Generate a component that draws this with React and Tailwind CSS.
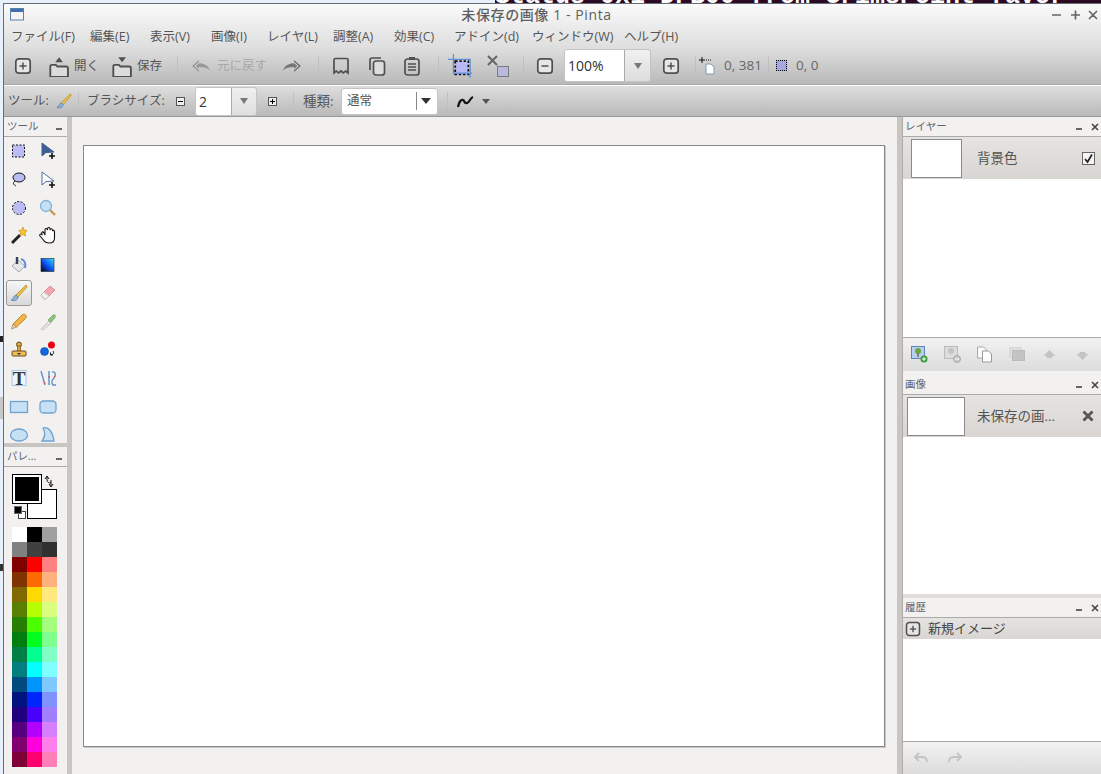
import React from "react";

const font = { fontFamily: '"Open Sans", "Noto Sans CJK JP", sans-serif' };

const menus = [
  ["ファイル(F)", "w-[79px]"],
  ["編集(E)", "w-[60px]"],
  ["表示(V)", "w-[61px]"],
  ["画像(I)", "w-[56px]"],
  ["レイヤ(L)", "w-[66px]"],
  ["調整(A)", "w-[61px]"],
  ["効果(C)", "w-[60px]"],
  ["アドイン(d)", "w-[78px]"],
  ["ウィンドウ(W)", "w-[92px]"],
  ["ヘルプ(H)", "w-[70px]"],
];

const palette = [
  "#ffffff", "#000000", "#a0a0a0",
  "#808080", "#404040", "#303030",
  "#800000", "#ff0000", "#ff8080",
  "#803300", "#ff6a00", "#ffb280",
  "#806a00", "#ffd800", "#ffe97f",
  "#5b7f00", "#b6ff00", "#daff7f",
  "#267f00", "#4cff00", "#a5ff7f",
  "#007f0e", "#00ff21", "#7fff8e",
  "#007f46", "#00ff90", "#7fffc5",
  "#007f7f", "#00ffff", "#7fffff",
  "#004a7f", "#0094ff", "#7fc9ff",
  "#00137f", "#0026ff", "#7f92ff",
  "#21007f", "#4800ff", "#a17fff",
  "#57007f", "#b200ff", "#d67fff",
  "#7f006e", "#ff00dc", "#ff7fed",
  "#7f0037", "#ff006e", "#ff7fb6",
];

function Ico({ s = 20, children }) {
  return (
    <svg width={s} height={s} viewBox="0 0 20 20" fill="none" className="block shrink-0">
      {children}
    </svg>
  );
}

const dark = "#505050";

function BoxIcon({ plus, s = 20, color = dark }) {
  return (
    <Ico s={s}>
      <rect x="2.800" y="2.800" width="14.400" height="14.400" rx="3" stroke={color} strokeWidth="1.700" fill="#e6e6e6" />
      <path d="M6.500 10h7" stroke={color} strokeWidth="1.500" />
      {plus && <path d="M10 6.500v7" stroke={color} strokeWidth="1.500" />}
    </Ico>
  );
}

function TrayIcon({ down }) {
  return (
    <Ico s={22}>
      <path d="M3 20V10.500c0-1 .6-1.500 1.500-1.500h3.500l1.500 1.500h8c1 0 1.500.5 1.500 1.500v8z" stroke={dark} strokeWidth="1.700" fill="#dcdcdc" />
      {down ? <path d="M7.500 2h7L11 6.500z" fill={dark} /> : <path d="M11 2l3.500 4.500h-7z" fill={dark} />}
    </Ico>
  );
}

function UndoIcon({ flip, color = "#999" }) {
  return (
    <svg width="20" height="14" viewBox="0 0 20 14" className={flip ? "block -scale-x-100" : "block"}>
      <path d="M1 7l7-6v3.200c5 0 9 2 11 7-3-2.500-6-3.200-11-3.200V13z" fill={color} />
      <path d="M4 7l4-3.500M4 7l4 3.500" stroke="#e0e0e0" strokeWidth="1" />
    </svg>
  );
}

function Sep({ className = "h-[20px]" }) {
  return <div className={`w-px bg-[#c0c0c0] shrink-0 ${className}`} />;
}

function Combo({ text, className, field = "w-[60px]" }) {
  return (
    <div className={`flex rounded-[3px] border border-[#c4c4c4] bg-linear-to-b from-[#f0f0f0] to-[#dedede] shrink-0 overflow-hidden ${className}`}>
      <div className={`${field} bg-white flex items-center pl-[3px] text-[14px] text-[#333] border-r border-[#aaa]`}>{text}</div>
      <div className="flex-1 flex items-center justify-center">
        <div className="w-0 h-0 border-x-[4px] border-x-transparent border-t-[6px] border-t-[#777]" />
      </div>
    </div>
  );
}

function Small({ plus }) {
  return (
    <div className="w-[9px] h-[9px] border border-[#555] bg-[#eee] relative shrink-0">
      <div className="absolute left-[1px] top-[3px] w-[5px] h-px bg-black" />
      {plus && <div className="absolute left-[3px] top-[1px] w-px h-[5px] bg-black" />}
    </div>
  );
}

function Crop() {
  return (
    <Ico s={24}>
      <rect x="6" y="6" width="11" height="11" fill="#b9b9f5" stroke="#111" strokeDasharray="2 1.500" strokeWidth="1.500" />
      <path d="M0 4.500h18.500V20M4.500 0v16H20" stroke="#5d8fd8" strokeWidth="1" fill="none" />
    </Ico>
  );
}

function Deselect() {
  return (
    <svg width="24" height="24" viewBox="0 0 24 24" className="block shrink-0">
      <path d="M2 2l9 9M11 2l-9 9" stroke="#666" strokeWidth="2" />
      <rect x="11.500" y="12.500" width="11" height="10" fill="#b9b9df" stroke="#333" strokeDasharray="1 1" />
    </svg>
  );
}

function ToolBtn({ children, active }) {
  return (
    <div className="flex items-center justify-center">
      <div className={active ? "w-[26px] h-[26px] flex items-center justify-center rounded-[3px] border border-[#999] bg-linear-to-b from-[#f6f6f6] to-[#d8d8d8]" : "w-[26px] h-[26px] flex items-center justify-center"}>
        {children}
      </div>
    </div>
  );
}

const arrow = (fill, stroke) => (
  <>
    <path d="M4 2v13l4-3.500 8-.5z" fill={fill} stroke={stroke} strokeWidth="1" />
    <path d="M14 12v6M11 15h6" stroke="#111" strokeWidth="1.600" />
  </>
);

const Brush = () => (
  <>
    <path d="M17 2L7 12l2 2L18 4z" fill="#eec04a" stroke="#b98a20" strokeWidth=".8" />
    <path d="M7 12c-3 1-2 4-5 5 3 1.500 7 .5 7-3z" fill="#8fb0d8" stroke="#5a7fae" strokeWidth=".8" />
  </>
);

const tools = [
  <rect x="3.500" y="4" width="12" height="12" fill="#bcbcf4" stroke="#111" strokeDasharray="2 1.500" />,
  arrow("#3f5f92", "#3f5f92"),
  <>
    <ellipse cx="10" cy="7.500" rx="6" ry="4.500" fill="#bcbcf4" stroke="#111" />
    <path d="M6 11c-3 2-1 4 1 5" stroke="#111" />
  </>,
  arrow("#fff", "#4a6a9c"),
  <circle cx="10" cy="10" r="6.500" fill="#bcbcf4" stroke="#111" strokeDasharray="2 1.500" />,
  <>
    <circle cx="8" cy="8" r="5.500" fill="#c3e0f6" stroke="#7fb0da" strokeWidth="1.300" />
    <path d="M12 12l5 5" stroke="#c49a50" strokeWidth="2.400" />
  </>,
  <>
    <path d="M3 17L11 9" stroke="#222" strokeWidth="3" />
    <path d="M14 1l1 3 3 .5-2 2.500.5 3-3-1.500-2.500 1 .5-3-2-2 3-.5z" fill="#f2c230" stroke="#c98a20" strokeWidth=".6" />
  </>,
  <path d="M4 8c-1-2 1-3 2-1l1 2V4c0-2 2-2 2.500 0V3c0-2 2.500-2 2.500 0v1c.5-2 2.500-1.500 2.500.5V5c.5-1 2-1 2 1v6c0 3-2 5-5 5-4 0-5-1-6-3L2 10c-1-1.500 1-2.500 2-1.500z" fill="#fff" stroke="#111" strokeWidth="1.100" />,
  <>
    <path d="M3 11l6-6 7 6-6 6z" fill="#e6e6e6" stroke="#aaa" />
    <path d="M8 2v7" stroke="#345" strokeWidth="2.400" />
    <path d="M12 4c4 1 5 5 4 9" stroke="#5d8fd8" strokeWidth="2" />
  </>,
  <>
    <defs>
      <linearGradient id="grad" x1="0" y1="1" x2="1" y2="0">
        <stop offset="0" stopColor="#000" />
        <stop offset=".45" stopColor="#0a4af0" />
        <stop offset="1" stopColor="#35e0ff" />
      </linearGradient>
    </defs>
    <rect x="3" y="3.500" width="13" height="13" fill="url(#grad)" stroke="#222" strokeWidth=".6" />
  </>,
  <Brush />,
  <>
    <path d="M3 12l9-9 5 4-9 9H6z" fill="#f4a4ac" stroke="#c88" strokeWidth=".8" />
    <path d="M3 12l3-3 5 4-3 3H6z" fill="#f0f0f0" stroke="#bbb" strokeWidth=".8" />
  </>,
  <>
    <path d="M4 12L13 3c1-1 2.500-1 3.500 0s1 2.500 0 3.500L7.500 15z" fill="#f0b54a" stroke="#c08a30" />
    <path d="M4 12l3.500 3-5 2z" fill="#eed5a8" stroke="#a86" strokeWidth=".8" />
  </>,
  <>
    <path d="M3 17l8-8 2 2-8 7z" fill="#e4e4e4" stroke="#c4c4c4" />
    <path d="M10 8l5-5c2-1 3 1 2 2.500l-4 5z" fill="#8cc47c" stroke="#7aa86c" strokeWidth=".8" />
  </>,
  <>
    <circle cx="10" cy="4.500" r="2.500" fill="#e0a840" stroke="#6a4a18" />
    <rect x="8.500" y="6" width="3" height="6" fill="#e0a840" stroke="#6a4a18" strokeWidth=".7" />
    <rect x="3" y="11" width="14" height="5" rx="1" fill="#eebd55" stroke="#6a4a18" />
    <path d="M8 13h4l-2 2z" fill="#333" />
  </>,
  <>
    <circle cx="13.500" cy="5" r="3.500" fill="#e8000f" />
    <circle cx="6.500" cy="11.500" r="4" fill="#1268e0" stroke="#0a3a88" strokeWidth=".5" />
    <path d="M15 11c1.500 2 0 4-2.500 3.500M12.500 12.500v2.500h2.500" stroke="#111" strokeWidth="1" />
  </>,
  <>
    <rect x="3" y="2.500" width="14" height="15" fill="#f0f4fa" stroke="#9cbce4" strokeWidth=".8" />
    <text x="10" y="16.500" textAnchor="middle" fontSize="19" fontWeight="700" fill="#333" fontFamily="Liberation Serif, serif">T</text>
  </>,
  <>
    <path d="M3 3l4 14M11 3v14" stroke="#5d8fc8" strokeWidth="1.400" />
    <path d="M14 4c4-1 4 4 2 6s-3 5-1 7h3" stroke="#5d8fc8" strokeWidth="1.400" />
    <path d="M6 14l1 2M11 8v2M16 8l1 1" stroke="#e25050" strokeWidth="1.200" />
  </>,
  <rect x="1.500" y="4.500" width="17" height="11" fill="#c7e0f4" stroke="#6fa3d0" strokeWidth="1.300" />,
  <rect x="2" y="4" width="16" height="12" rx="3.500" fill="#c7e0f4" stroke="#6fa3d0" strokeWidth="1.300" />,
  <ellipse cx="10" cy="10" rx="8.500" ry="6" fill="#c7e0f4" stroke="#6fa3d0" strokeWidth="1.300" />,
  <path d="M5 3c6-2 10 5 11 13H4c3-4 4-8 1-13z" fill="#c7e0f4" stroke="#6fa3d0" strokeWidth="1.300" />,
];

function DockHead({ title, dash = "right-[19px]", close = "right-[2px]", pad = "pl-[3px]" }) {
  return (
    <div className={`h-[20px] shrink-0 relative bg-[#f2f1f0] border-b border-[#aaa] flex items-center text-[10.5px] text-[#5c6470] ${pad}`}>
      {title}
      <div className={`absolute top-[11px] w-[6px] h-[2px] bg-[#666] ${dash}`} />
      {close && (
        <svg width="8" height="8" viewBox="0 0 8 8" className={`absolute top-[6px] ${close}`}>
          <path d="M1 1l6 6M7 1l-6 6" stroke="#444" strokeWidth="1.600" />
        </svg>
      )}
    </div>
  );
}

function Thumb({ className }) {
  return <div className={`bg-white border border-[#8a8a8a] shrink-0 ${className}`} />;
}

function BottomBar({ className, children }) {
  return (
    <div className={`border-t border-[#aaa] bg-linear-to-b from-[#f2f2f2] to-[#dcdcdc] flex items-center shrink-0 ${className}`}>
      {children}
    </div>
  );
}

function UndoSmall({ flip }) {
  return (
    <svg width="18" height="12" viewBox="0 0 18 12" className={flip ? "block -scale-x-100" : "block"}>
      <path d="M6 1L2 5l4 4M2 5h7c3 0 5 2 5 5" stroke="#c4c4c4" strokeWidth="1.800" fill="none" />
    </svg>
  );
}

export default function App() {
  return (
    <div style={font} className="w-[1101px] h-[774px] overflow-hidden flex flex-col bg-[#e8f0fc]">
      {/* desktop behind the window */}
      <div className="h-[3px] shrink-0 flex">
        <div className="w-[495px]" />
        <div className="flex-1 bg-[#2c0a24] overflow-hidden relative">
          <div className="absolute left-0 bottom-[-6px] text-white font-bold whitespace-pre text-[25px] leading-[25px]" style={{ fontFamily: '"Liberation Mono", monospace' }}>
            Status 0x1 DFB00 from GrimsPoint favor
          </div>
        </div>
      </div>
      <div className="flex-1 flex min-h-0">
        <div className="w-[3px] shrink-0 flex flex-col">
          <div className="h-[333px]" />
          <div className="h-[6px] bg-[#222]" />
          <div className="h-[55px]" />
          <div className="h-[22px] bg-[#c8c8c8]" />
          <div className="h-[145px]" />
          <div className="h-[7px] bg-[#333]" />
        </div>

        <div className="flex-1 flex flex-col border-l border-t border-[#666c78] min-w-0">
          <div className="bg-linear-to-b from-[#fafafa] via-[#dedede] via-55% to-[#b9b9b9] shrink-0">
            {/* title bar */}
            <div className="h-[21px] relative flex items-center justify-center text-[14px] tracking-[0.6px] font-medium text-[#5f5f5f]">
              <svg width="14" height="13" viewBox="0 0 14 13" className="absolute left-[6px] top-[4px]">
                <rect x="0.500" y="0.500" width="13" height="11.500" fill="#f4f4f4" stroke="#5f7fa8" />
                <rect x="1" y="1" width="12" height="3" fill="#3f6fb0" />
              </svg>
              <span className="mr-[32px]">未保存の画像 1 - Pinta</span>
              <div className="absolute right-0 top-0 flex items-center h-[21px]">
                <svg width="60" height="14" viewBox="0 0 60 14" className="block">
                  <path d="M11 7h9M30 7h9M34.500 2.500v9M48 3l8 8M56 3l-8 8" stroke="#666" strokeWidth="1.700" />
                </svg>
              </div>
            </div>
            {/* menu */}
            <div className="h-[22px] flex items-center pl-[7px] pt-[2px] text-[12.5px] text-[#555]">
              {menus.map(([m, w]) => (
                <div key={m} className={`${w} shrink-0 whitespace-nowrap`}>{m}</div>
              ))}
            </div>
            {/* main toolbar */}
            <div className="h-[37px] flex items-center pl-[9px] text-[12.5px] text-[#555]">
              <BoxIcon plus />
              <div className="ml-[14px]"><TrayIcon /></div>
              <span className="ml-[5px] mt-[2px] w-[26px]">開く</span>
              <div className="ml-[10px]"><TrayIcon down /></div>
              <span className="ml-[5px] mt-[2px] w-[30px]">保存</span>
              <Sep className="h-[20px] ml-[10px]" />
              <div className="ml-[13px]"><UndoIcon /></div>
              <span className="ml-[6px] mt-[2px] w-[54px] text-[#a8a8a8] whitespace-nowrap">元に戻す</span>
              <div className="ml-[11px]"><UndoIcon flip color="#777" /></div>
              <Sep className="h-[20px] ml-[16px]" />
              <svg width="20" height="20" viewBox="0 0 20 20" className="block ml-[12px]">
                <path d="M3 17V4c0-1 .5-1.500 1.500-1.500h11c1 0 1.500.5 1.500 1.500v13l-2.300-2-2.400 2-2.300-2-2.300 2-2.400-2z" stroke={dark} strokeWidth="1.700" fill="none" />
              </svg>
              <svg width="20" height="20" viewBox="0 0 20 20" className="block ml-[16px]">
                <path d="M3 14V4c0-1 .5-2 2-2h9" stroke={dark} strokeWidth="1.700" fill="none" />
                <rect x="6.500" y="5" width="11" height="14" rx="2.500" stroke={dark} strokeWidth="1.700" fill="#ddd" />
              </svg>
              <svg width="20" height="20" viewBox="0 0 20 20" className="block ml-[15px]">
                <rect x="3" y="3" width="14" height="16" rx="2.500" stroke={dark} strokeWidth="1.700" fill="none" />
                <rect x="7" y="1" width="6" height="3" fill={dark} />
                <path d="M6 8h8M6 11h8M6 14h8" stroke={dark} strokeWidth="1.500" />
              </svg>
              <Sep className="h-[20px] ml-[16px]" />
              <div className="ml-[9px]"><Crop /></div>
              <div className="ml-[14px]"><Deselect /></div>
              <Sep className="h-[20px] ml-[13px]" />
              <div className="ml-[11px]"><BoxIcon /></div>
              <Combo text="100%" className="w-[87px] h-[33px] ml-[9px]" />
              <div className="ml-[10px]"><BoxIcon plus /></div>
              <Sep className="h-[20px] ml-[14px]" />
              <svg width="18" height="18" viewBox="0 0 18 18" className="block ml-[3px]">
                <path d="M0 3h6M3 0v6" stroke="#111" />
                <path d="M7 3h6" stroke="#111" strokeDasharray="1 1" />
                <path d="M7 7h5l3 3v7H7z" fill="#fff" stroke="#7a9ac0" />
              </svg>
              <span className="ml-[7px] w-[44px] text-[13.5px] text-[#666] whitespace-nowrap">0, 381</span>
              <Sep className="h-[20px]" />
              <div className="w-[11px] h-[11px] ml-[7px] bg-[#a8a8e0] border border-dotted border-black" />
              <span className="ml-[9px] text-[13.5px] text-[#666]">0, 0</span>
            </div>
          </div>
          <div className="h-[2px] shrink-0 border-t border-[#a8a8a8] bg-white" />

          {/* tool options toolbar */}
          <div className="h-[30px] shrink-0 flex items-center pl-[4px] bg-linear-to-b from-[#dedede] to-[#b9b9b9] border-b border-[#999] text-[12.5px] text-[#555] box-content">
            <span className="w-[43px]">ツール:</span>
            <div className="ml-[4px]"><Ico s={18}><Brush /></Ico></div>
            <Sep className="h-[19px] ml-[5px]" />
            <span className="ml-[8px] w-[80px] whitespace-nowrap">ブラシサイズ:</span>
            <div className="ml-[9px]"><Small /></div>
            <Combo text="2" field="w-[36px]" className="w-[62px] h-[29px] ml-[10px]" />
            <div className="ml-[11px]"><Small plus /></div>
            <Sep className="h-[19px] ml-[16px]" />
            <span className="ml-[9px] w-[32px] text-[13.5px]">種類:</span>
            <div className="ml-[6px] w-[97px] h-[27px] flex items-center bg-white rounded-[3px] border border-[#c4c4c4] pl-[5px]">
              <span className="w-[69px] text-[#555]">通常</span>
              <div className="w-px h-[18px] bg-[#888]" />
              <div className="ml-[4px] w-0 h-0 border-x-[5px] border-x-transparent border-t-[6px] border-t-[#333]" />
            </div>
            <Sep className="h-[19px] ml-[9px]" />
            <svg width="20" height="18" viewBox="0 0 20 18" className="block ml-[8px]">
              <path d="M2 15c1-5 3-8 5-7s1 4 4 3 3-5 6-6" stroke="#111" strokeWidth="2.200" fill="none" />
            </svg>
            <div className="ml-[6px] w-0 h-0 border-x-[4px] border-x-transparent border-t-[5px] border-t-[#555]" />
          </div>

          <div className="flex-1 flex min-h-0">
            {/* left docks */}
            <div className="w-[63px] shrink-0 flex flex-col bg-[#f2f1f0]">
              <div className="h-[326px] shrink-0 flex flex-col overflow-hidden">
                <DockHead title="ツール" dash="right-[5px]" close={null} />
                <div className="grid grid-cols-[29px_29px] auto-rows-[28.400px]">
                  {tools.map((t, i) => (
                    <ToolBtn key={i} active={i === 10}>
                      <Ico s={20}>{t}</Ico>
                    </ToolBtn>
                  ))}
                </div>
              </div>
              <div className="h-[4px] shrink-0 bg-[#c9c5c2]" />
              <DockHead title="パレ..." dash="right-[5px]" close={null} />
              <div className="h-[60px] shrink-0 relative">
                <div className="absolute left-[23px] top-[22px] w-[30px] h-[30px] bg-white border border-black" />
                <div className="absolute left-[9px] top-[8px] w-[28px] h-[28px] bg-black border-2 border-white outline outline-black" />
                <svg width="12" height="12" viewBox="0 0 12 12" className="absolute left-[39px] top-[8px]">
                  <path d="M2 4l2-3 2 3M4 2v3c0 2 2 3 4 3M8 5v6M6 9l2 3 2-3" stroke="#111" strokeWidth="1" fill="none" />
                </svg>
                <div className="absolute left-[14px] top-[44px] w-[8px] h-[8px] bg-white border border-[#444]" />
                <div className="absolute left-[10px] top-[39px] w-[8px] h-[8px] bg-black border border-[#666]" />
              </div>
              <div className="ml-[8px] w-[45px] grid grid-cols-3 auto-rows-[15px]">
                {palette.map((c, i) => (
                  <div key={i} style={{ backgroundColor: c }} />
                ))}
              </div>
            </div>
            <div className="w-[5px] shrink-0 bg-[#c9c5c2]" />

            {/* canvas */}
            <div className="w-[825px] shrink-0 bg-[#f2f1f0] pl-[11px] pt-[28px]">
              <div className="w-[802px] h-[602px] bg-white border border-[#888] shadow-[1px_1px_0_#c8c8c8]" />
            </div>
            <div className="w-[5px] shrink-0 bg-[#c9c5c2]" />

            {/* right docks */}
            <div className="flex-1 flex flex-col min-w-0 border-l border-[#b0aca9] bg-white">
              <div className="h-[254px] shrink-0 flex flex-col">
                <DockHead title="レイヤー" pad="pl-[2px]" />
                <div className="h-[42px] shrink-0 flex items-center bg-linear-to-b from-[#e6e4e2] to-[#d8d5d2] pl-[8px] text-[13.500px] text-[#555]">
                  <Thumb className="w-[51px] h-[39px]" />
                  <span className="ml-[15px] w-[105px]">背景色</span>
                  <div className="w-[13px] h-[13px] border border-[#666] bg-[#f4f4f4] flex items-center justify-center">
                    <svg width="11" height="11" viewBox="0 0 11 11"><path d="M2 6l2.500 3L9 1.500" stroke="#222" strokeWidth="1.700" fill="none" /></svg>
                  </div>
                </div>
                <div className="flex-1" />
                <BottomBar className="h-[34px] pl-[8px] gap-[15.500px]">
                  <svg width="17" height="17" viewBox="0 0 17 17" className="block">
                    <rect x="0.500" y="0.500" width="13" height="12" fill="#b8d0f0" stroke="#5f82b8" />
                    <circle cx="7" cy="5" r="3" fill="#6aa83c" />
                    <path d="M7 7v4" stroke="#765" strokeWidth="1.500" />
                    <circle cx="13" cy="13" r="3.500" fill="#3a9a3a" />
                    <path d="M11 13h4M13 11v4" stroke="#fff" />
                  </svg>
                  <svg width="17" height="17" viewBox="0 0 17 17" className="block">
                    <rect x="0.500" y="0.500" width="13" height="12" fill="#ddd" stroke="#bbb" />
                    <circle cx="7" cy="5" r="3" fill="#c4c4c4" />
                    <circle cx="13" cy="13" r="3.500" fill="#c8c8c8" stroke="#aaa" />
                    <path d="M11 13h4" stroke="#fff" />
                  </svg>
                  <svg width="17" height="17" viewBox="0 0 17 17" className="block">
                    <path d="M1.500 1h6l3 3v8h-9z" fill="#fbfbfb" stroke="#aaa" />
                    <path d="M6.500 5h6l3 3v8h-9z" fill="#fff" stroke="#999" />
                  </svg>
                  <svg width="17" height="17" viewBox="0 0 17 17" className="block">
                    <rect x="1" y="2" width="11" height="9" fill="#e4e4e4" stroke="#ccc" />
                    <rect x="3.500" y="4.500" width="12" height="10" fill="#c4c4c4" stroke="#bbb" />
                  </svg>
                  <svg width="17" height="17" viewBox="0 0 17 17" className="block">
                    <path d="M8.500 4l6 6h-3v2h-6v-2h-3z" fill="#c4c4c4" />
                  </svg>
                  <svg width="17" height="17" viewBox="0 0 17 17" className="block">
                    <path d="M8.500 14l6-6h-3V6h-6v2h-3z" fill="#c4c4c4" />
                  </svg>
                </BottomBar>
              </div>
              <div className="h-[4px] shrink-0 bg-[#f2f1f0]" />
              <div className="h-[219px] shrink-0 flex flex-col">
                <DockHead title="画像" pad="pl-[2px]" />
                <div className="h-[42px] shrink-0 flex items-center bg-linear-to-b from-[#e6e4e2] to-[#d8d5d2] pl-[4px] text-[13.500px] text-[#555]">
                  <Thumb className="w-[58px] h-[39px]" />
                  <span className="ml-[12px] w-[105px] whitespace-nowrap">未保存の画...</span>
                  <svg width="12" height="12" viewBox="0 0 12 12" className="block">
                    <path d="M1.500 1.500l9 9M10.500 1.500l-9 9" stroke="#555" strokeWidth="2.800" />
                  </svg>
                </div>
              </div>
              <div className="h-[4px] shrink-0 bg-[#e0dedc]" />
              <div className="flex-1 flex flex-col min-h-0">
                <DockHead title="履歴" pad="pl-[2px]" />
                <div className="h-[21px] shrink-0 flex items-center bg-linear-to-b from-[#e6e4e2] to-[#d8d5d2] pl-[1px] text-[13px] text-[#444]">
                  <BoxIcon plus s={18} />
                  <span className="ml-[6px]">新規イメージ</span>
                </div>
                <div className="flex-1" />
                <BottomBar className="h-[33px] pl-[10px] gap-[14px]">
                  <UndoSmall />
                  <UndoSmall flip />
                </BottomBar>
              </div>
            </div>
          </div>
        </div>
      </div>
    </div>
  );
}
